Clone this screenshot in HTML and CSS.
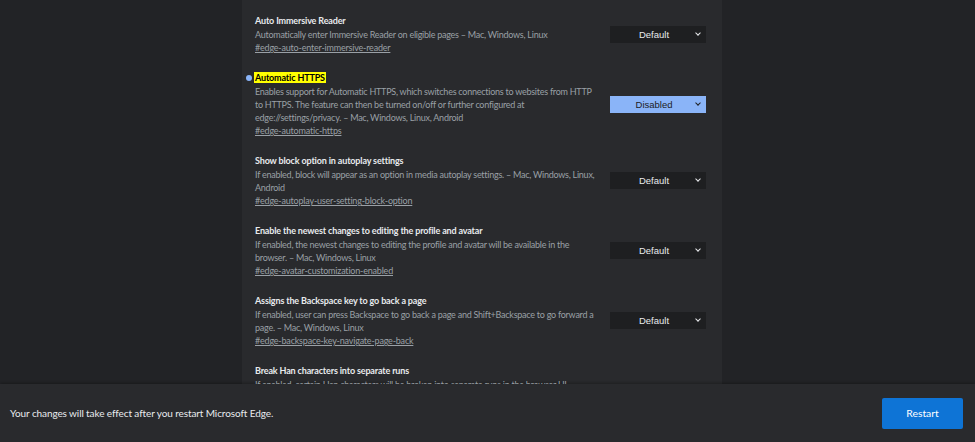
FILE: index.html
```html
<!DOCTYPE html>
<html lang="en">
<head>
    <meta charset="UTF-8">
    <title>Experiments</title>
    <link rel="stylesheet" href="styles.css">
</head>
<body>
    <div class="page">
        <div class="flags-panel">
            <div class="flag">
                <div class="flag-info">
                    <div class="flag-title">Auto Immersive Reader</div>
                    <p class="flag-desc">Automatically enter Immersive Reader on eligible pages – Mac, Windows, Linux</p>
                    <a class="flag-link" href="#">#edge-auto-enter-immersive-reader</a>
                </div>
                <div class="flag-select">Default <span class="chevron"></span></div>
            </div>

            <div class="flag changed">
                <span class="dot"></span>
                <div class="flag-info">
                    <div class="flag-title"><mark>Automatic HTTPS</mark></div>
                    <p class="flag-desc">Enables support for Automatic HTTPS, which switches connections to websites from HTTP to HTTPS. The feature can then be turned on/off or further configured at edge://settings/privacy. – Mac, Windows, Linux, Android</p>
                    <a class="flag-link" href="#">#edge-automatic-https</a>
                </div>
                <div class="flag-select active">Disabled <span class="chevron"></span></div>
            </div>

            <div class="flag">
                <div class="flag-info">
                    <div class="flag-title">Show block option in autoplay settings</div>
                    <p class="flag-desc">If enabled, block will appear as an option in media autoplay settings. – Mac, Windows, Linux, Android</p>
                    <a class="flag-link" href="#">#edge-autoplay-user-setting-block-option</a>
                </div>
                <div class="flag-select">Default <span class="chevron"></span></div>
            </div>

            <div class="flag">
                <div class="flag-info">
                    <div class="flag-title">Enable the newest changes to editing the profile and avatar</div>
                    <p class="flag-desc">If enabled, the newest changes to editing the profile and avatar will be available in the browser. – Mac, Windows, Linux</p>
                    <a class="flag-link" href="#">#edge-avatar-customization-enabled</a>
                </div>
                <div class="flag-select">Default <span class="chevron"></span></div>
            </div>

            <div class="flag">
                <div class="flag-info">
                    <div class="flag-title">Assigns the Backspace key to go back a page</div>
                    <p class="flag-desc">If enabled, user can press Backspace to go back a page and Shift+Backspace to go forward a page. – Mac, Windows, Linux</p>
                    <a class="flag-link" href="#">#edge-backspace-key-navigate-page-back</a>
                </div>
                <div class="flag-select">Default <span class="chevron"></span></div>
            </div>

            <div class="flag">
                <div class="flag-info">
                    <div class="flag-title">Break Han characters into separate runs</div>
                    <p class="flag-desc">If enabled, certain Han characters will be broken into separate runs in the browser UI.</p>
                </div>
            </div>
        </div>
    </div>

    <div class="restart-bar">
        <span>Your changes will take effect after you restart Microsoft Edge.</span>
        <button class="restart-btn">Restart</button>
    </div>
</body>
</html>
```

FILE: styles.css
```css
:root {
    --page: #222326;
    --panel: #292a2d;
    --title: #e8eaed;
    --muted: #9aa0a6;
    --blue: #8ab4f8;
}

body {
    margin: 0;
    height: 442px;
    display: flex;
    flex-direction: column;
    overflow: hidden;
    background: var(--page);
    font-family: 'Lato', sans-serif;
}

.page {
    height: 384px;
    flex-shrink: 0;
    overflow: hidden;
}

.flags-panel {
    width: 480px;
    margin-left: 242px;
    height: 100%;
    padding: 14px 16px 0 13px;
    box-sizing: border-box;
    background: var(--panel);
}

.flag {
    position: relative;
    display: flex;
    align-items: center;
    gap: 10px;
    margin-bottom: 17px;
}

.flag-info {
    flex: 1;
}

.flag-title {
    color: var(--title);
    font-size: 9px;
    font-weight: bold;
    letter-spacing: -0.15px;
    line-height: 14px;
}

.flag-title mark {
    background: #ffff00;
    color: #000;
    padding: 0 1px;
    margin-left: -1px;
}

.flag-desc {
    margin: 0;
    color: var(--muted);
    font-size: 9px;
    letter-spacing: -0.25px;
    line-height: 13px;
}

.flag-link {
    display: block;
    color: var(--muted);
    font-size: 9px;
    letter-spacing: -0.2px;
    line-height: 13px;
}

.dot {
    position: absolute;
    left: -9px;
    top: 4px;
    width: 6px;
    height: 6px;
    border-radius: 50%;
    background: var(--blue);
}

.flag-select {
    position: relative;
    width: 96px;
    height: 17px;
    padding-right: 8px;
    box-sizing: border-box;
    flex-shrink: 0;
    background: #1e1f21;
    color: #e8eaed;
    font-family: 'Liberation Sans', Arial, sans-serif;
    font-size: 9.5px;
    line-height: 17px;
    text-align: center;
}

.flag-select.active {
    background: var(--blue);
    color: #202124;
}

.chevron {
    position: absolute;
    right: 6px;
    top: 5px;
    width: 3px;
    height: 3px;
    border-right: 1.5px solid currentColor;
    border-bottom: 1.5px solid currentColor;
    transform: rotate(45deg);
}

.restart-bar {
    flex: 1;
    display: flex;
    align-items: center;
    justify-content: space-between;
    padding: 0 12px 0 10px;
    background: var(--panel);
    box-shadow: 0 -1px 3px rgba(0,0,0,0.3);
    color: #e8eaed;
    font-size: 10px;
    letter-spacing: -0.1px;
}

.restart-btn {
    width: 81px;
    height: 31px;
    border: none;
    border-radius: 2px;
    background: #0e74d6;
    color: white;
    font-family: 'Lato', sans-serif;
    font-size: 10.4px;
    cursor: pointer;
}
```
